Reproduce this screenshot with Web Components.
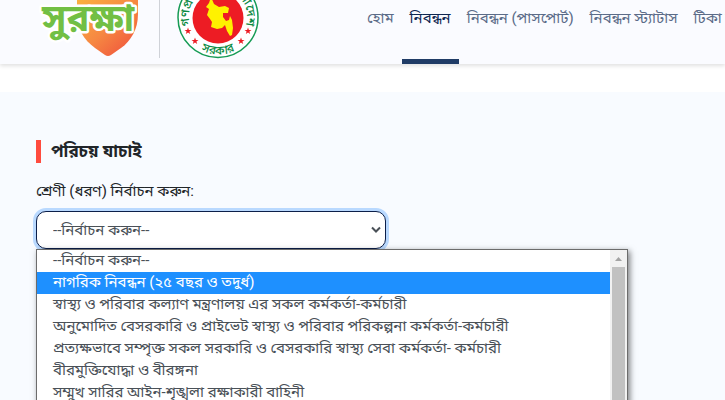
<!DOCTYPE html>
<html lang="bn">
<head>
<meta charset="utf-8">
<meta name="viewport" content="width=device-width, initial-scale=1">
<title>সুরক্ষা</title>
<style>
    body {
        display: flex;
        flex-direction: column;
        margin: 0;
        height: 100vh;
        overflow: hidden;
        background: #fff;
        color: #212529;
        font: 15px/24px Roboto, "Noto Sans Bengali", "Noto Sans", sans-serif;
    }
</style>
</head>
<body>
<site-header>
    <surokkha-logo slot="brand"></surokkha-logo>
    <govt-seal slot="brand"></govt-seal>
    <nav-tab>হোম</nav-tab>
    <nav-tab active>নিবন্ধন</nav-tab>
    <nav-tab>নিবন্ধন (পাসপোর্ট)</nav-tab>
    <nav-tab>নিবন্ধন স্ট্যাটাস</nav-tab>
    <nav-tab>টিকা ক</nav-tab>
</site-header>
<form-section>
    <span slot="title">পরিচয় যাচাই</span>
    <category-select></category-select>
</form-section>

<script>
class SurokkhaLogo extends HTMLElement {
    constructor() {
        super();
        this.attachShadow({mode: 'open'}).innerHTML = `
            <style>
                :host { display: block; }
                svg { display: block; }
                text { font-weight: 700; font-size: 38px; }
            </style>
            <svg width="104" height="58" viewBox="36 0 104 58" role="img" aria-label="সুরক্ষা">
                <defs>
                    <linearGradient id="shield" x1="0" y1="0" x2="1" y2="1">
                        <stop offset="0" stop-color="#fbb040"/>
                        <stop offset=".5" stop-color="#f68842"/>
                        <stop offset="1" stop-color="#ef4a3c"/>
                    </linearGradient>
                </defs>
                <path fill="url(#shield)" d="M77 0H138V14C138 29 131 41 121 48L111 55Q108 57 105 55L95 48C84 40 77 29 77 14Z"/>
                <text x="42" y="31" fill="#72bf44" stroke="#fff" stroke-width="5" stroke-linejoin="round" paint-order="stroke">সুরক্ষা</text>
            </svg>`;
    }
}
customElements.define('surokkha-logo', SurokkhaLogo);

class GovtSeal extends HTMLElement {
    constructor() {
        super();
        this.attachShadow({mode: 'open'}).innerHTML = `
            <style>
                :host { display: block; }
                svg { display: block; }
                text { font-size: 12px; font-weight: 500; fill: #0b8a43; }
            </style>
            <svg width="82" height="59" viewBox="177 0 82 59" role="img" aria-label="গণপ্রজাতন্ত্রী বাংলাদেশ সরকার">
                <defs>
                    <path id="top" d="M194 33A29 29 0 1 1 242 33"/>
                    <path id="bottom" d="M182 26A37 37 0 0 0 254 26"/>
                    <path id="star" d="M0-3.6L.9-1.1 3.5-1.1 1.4.5 2.2 3 0 1.5-2.2 3-1.4.5-3.5-1.1-.9-1.1Z"/>
                </defs>
                <circle cx="218" cy="17.500" r="40" fill="#fff" stroke="#169b55" stroke-width="1.5"/>
                <circle cx="218" cy="18" r="25.500" fill="#ed1c24"/>
                <path fill="#fff200" d="M211-3L214 4 219 7 225 6 229 8 228 13 223 13 223 17 226 21 229 20 230 16 232 20 233 28 232 35 230 36 227 31 225 25 222 28 217 29 211 27 212 22 210 19 207 15 209 9 206 7 209 3Z"/>
                <g fill="#ed1c24">
                    <use href="#star" x="188" y="31"/>
                    <use href="#star" x="195" y="41"/>
                    <use href="#star" x="241" y="41"/>
                    <use href="#star" x="248" y="31"/>
                </g>
                <text><textPath href="#top" startOffset="50%" text-anchor="middle">গণপ্রজাতন্ত্রী বাংলাদেশ</textPath></text>
                <text><textPath href="#bottom" startOffset="50%" text-anchor="middle">সরকার</textPath></text>
            </svg>`;
    }
}
customElements.define('govt-seal', GovtSeal);

class NavTab extends HTMLElement {
    constructor() {
        super();
        this.attachShadow({mode: 'open'}).innerHTML = `
            <style>
                :host { display: block; flex: none; }
                a {
                    display: block;
                    padding: 6px 8px 29px;
                    border-bottom: 5px solid transparent;
                    color: #5b6b88;
                    text-decoration: none;
                    white-space: nowrap;
                }
                :host([active]) a { color: #0d2550; border-color: #203c66; }
            </style>
            <a href="#"><slot></slot></a>`;
    }
}
customElements.define('nav-tab', NavTab);

class SiteHeader extends HTMLElement {
    constructor() {
        super();
        this.attachShadow({mode: 'open'}).innerHTML = `
            <style>
                :host {
                    display: flex;
                    flex: none;
                    gap: 100px;
                    padding-left: 36px;
                    background: #fafbff;
                    box-shadow: 0 2px 4px rgba(0, 0, 0, .12);
                }
                .brand { display: flex; gap: 19px; flex: none; }
                .brand ::slotted(govt-seal) { padding-left: 17px; border-left: 1px solid #cfd2d8; height: 58px; }
                nav { display: flex; min-width: 0; }
            </style>
            <div class="brand"><slot name="brand"></slot></div>
            <nav><slot></slot></nav>`;
    }
}
customElements.define('site-header', SiteHeader);

class FormSection extends HTMLElement {
    constructor() {
        super();
        this.attachShadow({mode: 'open'}).innerHTML = `
            <style>
                :host {
                    display: block;
                    flex: 1;
                    min-height: 0;
                    margin-top: 28px;
                    padding: 48px 36px 0;
                    background: #f8fbff;
                }
                h2 {
                    margin: 0 0 16px;
                    padding-left: 10px;
                    border-left: 5px solid #ff4b3e;
                    font-size: 17px;
                    line-height: 23px;
                    font-weight: 700;
                }
            </style>
            <h2><slot name="title"></slot></h2>
            <slot></slot>`;
    }
}
customElements.define('form-section', FormSection);

class OptionList extends HTMLElement {
    constructor() {
        super();
        this.attachShadow({mode: 'open'}).innerHTML = `
            <style>
                :host {
                    display: flex;
                    border: 1px solid #6c6c6c;
                    background: #fff;
                    box-shadow: 2px 2px 6px rgba(0, 0, 0, .5);
                    color: #495057;
                    line-height: 20px;
                }
                .options { flex: 1; min-width: 0; }
                ::slotted(*) { display: block; padding: 0 16px 2px; white-space: nowrap; }
                ::slotted([aria-selected="true"]) { background: #1e90ff; color: #fff; }
                .bar { width: 17px; display: flex; flex-direction: column; background: #f1f1f1; }
                .bar svg { display: block; flex: none; }
                .thumb { flex: 1; margin: 0 2px; background: #c1c1c1; }
            </style>
            <div class="options"><slot></slot></div>
            <div class="bar">
                <svg width="17" height="17" viewBox="0 0 17 17"><path d="M5 11L8.500 7 12 11Z" fill="#a3a3a3"/></svg>
                <div class="thumb"></div>
            </div>`;
    }
}
customElements.define('option-list', OptionList);

class CategorySelect extends HTMLElement {
    constructor() {
        super();
        this.attachShadow({mode: 'open'}).innerHTML = `
            <style>
                :host { display: block; }
                label { display: block; margin-bottom: 8px; }
                .field { position: relative; width: 350px; max-width: 100%; }
                select {
                    appearance: none;
                    display: block;
                    box-sizing: border-box;
                    width: 100%;
                    height: 38px;
                    padding: 0 16px;
                    border: 1px solid #0c1f4a;
                    border-radius: 10px;
                    outline: 0;
                    background: #fff;
                    box-shadow: 0 0 0 3px #b9d9ff;
                    color: #495057;
                    font: inherit;
                }
                .arrow { position: absolute; right: 5px; top: 15px; pointer-events: none; }
                option-list { position: absolute; top: 100%; left: 0; width: 590px; }
            </style>
            <label for="category">শ্রেণী (ধরণ) নির্বাচন করুন:</label>
            <div class="field">
                <select id="category"><option>--নির্বাচন করুন--</option></select>
                <svg class="arrow" width="10" height="8" viewBox="0 0 10 8"><path d="M1 1.500L5 5.500 9 1.500" fill="none" stroke="#495057" stroke-width="2"/></svg>
                <option-list role="listbox" aria-label="শ্রেণী (ধরণ)">
                    <div role="option">--নির্বাচন করুন--</div>
                    <div role="option" aria-selected="true">নাগরিক নিবন্ধন (২৫ বছর ও তদুর্ধ)</div>
                    <div role="option">স্বাস্থ্য ও পরিবার কল্যাণ মন্ত্রণালয় এর সকল কর্মকর্তা-কর্মচারী</div>
                    <div role="option">অনুমোদিত বেসরকারি ও প্রাইভেট স্বাস্থ্য ও পরিবার পরিকল্পনা কর্মকর্তা-কর্মচারী</div>
                    <div role="option">প্রত্যক্ষভাবে সম্পৃক্ত সকল সরকারি ও বেসরকারি স্বাস্থ্য সেবা কর্মকর্তা- কর্মচারী</div>
                    <div role="option">বীরমুক্তিযোদ্ধা ও বীরঙ্গনা</div>
                    <div role="option">সম্মুখ সারির আইন-শৃঙ্খলা রক্ষাকারী বাহিনী</div>
                </option-list>
            </div>`;
    }
}
customElements.define('category-select', CategorySelect);
</script>
</body>
</html>
